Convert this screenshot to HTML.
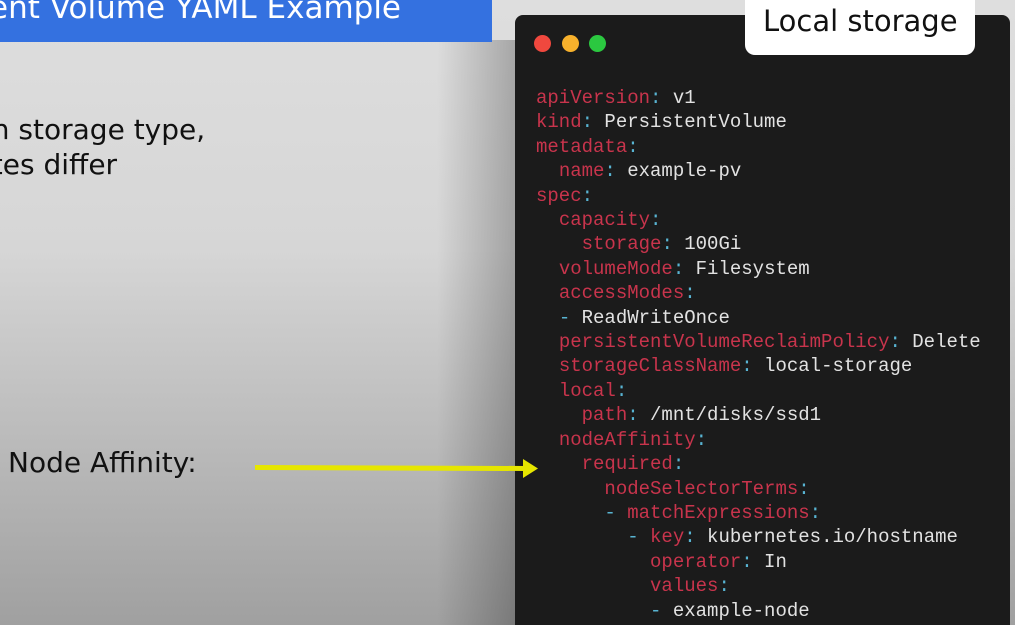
<!DOCTYPE html>
<html><head><meta charset="utf-8"><style>
*{margin:0;padding:0;box-sizing:border-box}
html,body{width:1015px;height:625px;overflow:hidden}
body{position:relative;font-family:"DejaVu Sans","Liberation Sans",sans-serif;background:linear-gradient(#dedede 0%,#d6d6d6 40%,#a0a0a0 100%)}
.shade{position:absolute;left:437px;top:40px;width:80px;height:585px;background:linear-gradient(90deg,rgba(0,0,0,0),rgba(0,0,0,0.25))}
.title{position:absolute;left:0;top:0;width:492px;height:42px;background:#3471e0;overflow:hidden}
.title span{position:absolute;right:91px;top:-10px;color:#fff;font-size:31px;white-space:nowrap}
.t{position:absolute;color:#111;font-size:28px;white-space:nowrap}
.card{position:absolute;left:515px;top:15px;width:495px;height:610px;background:#1b1b1b;border-radius:8px 8px 0 0}
.dot{position:absolute;top:35px;width:17px;height:17px;border-radius:50%}
.label{position:absolute;left:745px;top:-10px;width:230px;height:65px;background:#fff;border-radius:10px;font-size:29px;color:#111;padding:14px 0 0 18px}
pre{position:absolute;left:536px;top:86px;font-family:"Liberation Mono",monospace;font-size:19px;line-height:24.4px;color:#e2e2e2}
.k{color:#c8344c}.c{color:#58b4d2}
</style></head><body>
<div class="shade"></div>
<div class="title"><span>Persistent Volume YAML Example</span></div>
<div class="t" style="left:-16px;top:113px">in storage type,</div>
<div class="t" style="left:-16px;top:148px">ites differ</div>
<div class="t" style="left:8px;top:446px">Node Affinity:</div>
<div class="card"></div>
<svg style="position:absolute;left:250px;top:455px" width="300" height="26"><path d="M5 10 L275 11 L275 16 L5 15Z" fill="#e6e600"/><path d="M273 4 L288 13.5 L273 23Z" fill="#e6e600"/></svg>
<div class="dot" style="left:534px;background:#f0483e"></div>
<div class="dot" style="left:562px;background:#f7b12c"></div>
<div class="dot" style="left:589px;background:#2bc840"></div>
<div class="label">Local storage</div>
<pre><span class="k">apiVersion</span><span class="c">:</span> v1
<span class="k">kind</span><span class="c">:</span> PersistentVolume
<span class="k">metadata</span><span class="c">:</span>
  <span class="k">name</span><span class="c">:</span> example-pv
<span class="k">spec</span><span class="c">:</span>
  <span class="k">capacity</span><span class="c">:</span>
    <span class="k">storage</span><span class="c">:</span> 100Gi
  <span class="k">volumeMode</span><span class="c">:</span> Filesystem
  <span class="k">accessModes</span><span class="c">:</span>
  <span class="c">-</span> ReadWriteOnce
  <span class="k">persistentVolumeReclaimPolicy</span><span class="c">:</span> Delete
  <span class="k">storageClassName</span><span class="c">:</span> local-storage
  <span class="k">local</span><span class="c">:</span>
    <span class="k">path</span><span class="c">:</span> /mnt/disks/ssd1
  <span class="k">nodeAffinity</span><span class="c">:</span>
    <span class="k">required</span><span class="c">:</span>
      <span class="k">nodeSelectorTerms</span><span class="c">:</span>
      <span class="c">-</span> <span class="k">matchExpressions</span><span class="c">:</span>
        <span class="c">-</span> <span class="k">key</span><span class="c">:</span> kubernetes.io/hostname
          <span class="k">operator</span><span class="c">:</span> In
          <span class="k">values</span><span class="c">:</span>
          <span class="c">-</span> example-node</pre>
</body></html>
